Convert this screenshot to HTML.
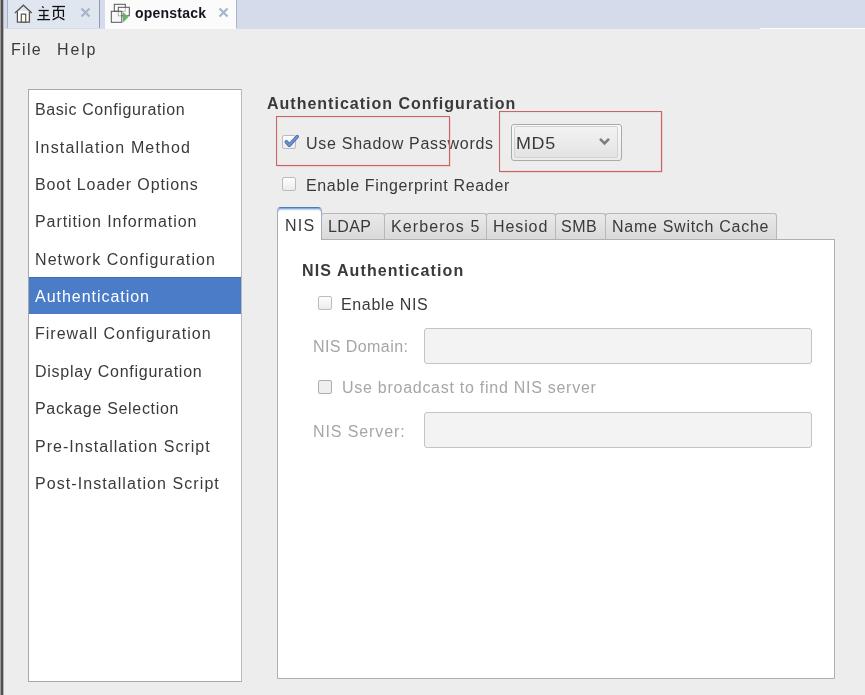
<!DOCTYPE html>
<html><head><meta charset="utf-8">
<style>
*{margin:0;padding:0;box-sizing:border-box}
html,body{width:865px;height:695px;overflow:hidden;background:#ededed}
body{position:relative;-webkit-font-smoothing:antialiased;font-family:"Liberation Sans",sans-serif;color:#3a3a3a}
.a{position:absolute}
.t{will-change:transform;position:absolute;white-space:pre;font-size:16px;line-height:16px;letter-spacing:0.7px;color:#3a3a3a}
.b{font-weight:bold;letter-spacing:1px}
.dis{color:#a6a6a6}
#tabbar{left:0;top:0;width:865px;height:29px;background:#d5dbeb}
#edge0{left:0;top:0;width:1px;height:695px;background:#9c9c9c}
#edge1{left:1px;top:0;width:2px;height:695px;background:#505050}
#edge2{left:3px;top:0;width:1px;height:695px;background:#b4b4b4}
#tab1{left:8px;top:0;width:91px;height:28px;background:#e0e6f0}
#tab1l{left:7px;top:0;width:1px;height:28px;background:#a6b2c8}
#tab1r{left:99px;top:0;width:1px;height:28px;background:#8c9ab8}
#tab2{left:105px;top:0;width:131px;height:29px;background:#fbfbfc}
#tab2r{left:236px;top:0;width:1px;height:28px;background:#a8b4cc}
.x{position:absolute;color:#a3b3cc;font-size:15px;font-weight:bold;line-height:15px}
#side{left:28px;top:89px;width:214px;height:593px;background:#fff;border:1px solid #a8a8a8;border-right-color:#b8b8b8}
.si{left:35px}
#sel{left:29px;top:277px;width:212px;height:37px;background:#4a7cc8;border-top:1px solid #3d6cb8}
.red{position:absolute;border:1.5px solid #c76565;box-shadow:0 0 1px .5px rgba(235,170,170,.35),inset 0 0 1px .5px rgba(235,170,170,.35)}
#nb{left:277px;top:239px;width:558px;height:440px;background:#fff;border:1px solid #b0b0b0}
.tab{position:absolute;top:213px;height:26px;background:linear-gradient(#e9e9e9,#d9d9d9);border:1px solid #b8b8b8;border-bottom:none;border-radius:3px 3px 0 0}
#atab{left:277px;top:207px;width:45px;height:33px;background:#fff;border:1px solid #a4acb8;border-top:1px solid #4d7bbd;border-bottom:none;border-radius:4px 4px 0 0;box-shadow:inset 0 1px 0 #86abdf,inset 0 2px 0 #c6dbf3,inset 0 3px 0 #eef5fc}
.entry{position:absolute;left:424px;width:388px;height:36px;background:#f3f3f3;border:1px solid #c4c4c4;border-radius:3px}
.cb{position:absolute;width:14px;height:14px;border:1px solid #bcbcbc;border-radius:2px;background:linear-gradient(#fdfdfd,#ececec)}
#combo{left:511px;top:124px;width:111px;height:37px;border:1px solid #a9a9a9;border-radius:3px;background:linear-gradient(#f9f9f9,#ececec)}#combo2{left:514px;top:126px;width:104px;height:32px;border:1px solid #d2d2d2;border-radius:2px;background:linear-gradient(#f3f3f3,#e3e3e3)}
</style></head><body>
<div id="tabbar" class="a"></div>
<div id="tab1l" class="a"></div>
<div id="tab1" class="a"></div>
<div id="tab1r" class="a"></div>
<div id="tab2" class="a"></div>
<div id="tab2r" class="a"></div>
<div class="a" style="left:760px;top:28px;width:105px;height:1px;background:#fbfbfd"></div>
<div class="a" style="left:237px;top:27px;width:523px;height:1px;background:#d9dcea"></div>
<!-- home icon -->
<svg class="a" style="left:14px;top:3.5px" width="20" height="20" viewBox="0 0 20 20">
<path d="M1 9 L9.4 1.2 L17.8 9" fill="none" stroke="#555" stroke-width="1.3" stroke-linejoin="miter"/>
<path d="M3.4 7.2 V18.2 H15.4 V7.2" fill="#fff" stroke="#555" stroke-width="1.3"/>
<path d="M7.3 18.2 V10.1 H11.7 V18.2 Z" fill="#fffce8" stroke="#555" stroke-width="1.2"/>
</svg>
<svg id="zh" class="a" style="left:0;top:0" width="70" height="24" viewBox="0 0 70 24" fill="none" stroke="#111" stroke-width="1.3">
<path d="M42.2 6.4 L43.6 7.8"/>
<path d="M38.6 10.5 H48.8"/>
<path d="M39 15.5 H48.4"/>
<path d="M37.3 19.6 H50"/>
<path d="M43.9 10.5 V19.6"/>
<path d="M52.3 6.5 H65"/>
<path d="M58.4 6.8 L57.4 10"/>
<path d="M53.7 17 V10.3 H63.4 V17"/>
<path d="M58.4 10.6 V16.8 L52.6 19.8"/>
<path d="M59.4 17.2 L64.4 19.8"/>
</svg>
<svg class="a" style="left:80px;top:6.5px" width="11" height="11" viewBox="0 0 11 11"><path d="M1.5 1.5 L9.5 9.5 M9.5 1.5 L1.5 9.5" stroke="#a6b6cc" stroke-width="2.3"/></svg>
<!-- openstack icon -->
<svg class="a" style="left:110px;top:3px" width="22" height="22" viewBox="0 0 22 22">
<rect x="4.3" y="1.3" width="11" height="7" fill="#fbfbfb" stroke="#555" stroke-width="1"/>
<rect x="8.3" y="4.3" width="11" height="8.5" fill="rgba(255,255,255,.6)" stroke="#555" stroke-width="1"/>
<rect x="1.3" y="8.3" width="10.5" height="11" fill="rgba(245,245,250,.6)" stroke="#555" stroke-width="1"/>
<path d="M13 9 L18.5 14 L13 19.5 Z" fill="#66b466"/>
</svg>
<div id="t2" class="t" style="left:134.60px;top:4.80px;font-size:14px;color:#151520;font-weight:bold;letter-spacing:0.22px">openstack</div>
<svg class="a" style="left:217.5px;top:6.5px" width="11" height="11" viewBox="0 0 11 11"><path d="M1.5 1.5 L9.5 9.5 M9.5 1.5 L1.5 9.5" stroke="#a6b6cc" stroke-width="2.3"/></svg>

<div id="edge0" class="a"></div><div id="edge1" class="a"></div><div id="edge2" class="a"></div>

<div id="t3" class="t" style="left:11.00px;top:41.80px;letter-spacing:1.30px">File</div>
<div id="t4" class="t" style="left:57.00px;top:41.80px;letter-spacing:1.87px">Help</div>

<div id="side" class="a"></div>
<div id="sel" class="a"></div>
<div id="t5" class="t si" style="top:102.30px;letter-spacing:0.60px">Basic Configuration</div>
<div id="t6" class="t si" style="top:140.04px;letter-spacing:1.15px">Installation Method</div>
<div id="t7" class="t si" style="top:177.18px;letter-spacing:0.89px">Boot Loader Options</div>
<div id="t8" class="t si" style="top:214.12px;letter-spacing:0.91px">Partition Information</div>
<div id="t9" class="t si" style="top:252.26px;letter-spacing:1.08px">Network Configuration</div>
<div id="t10" class="t si" style="top:289.20px;color:#fff;letter-spacing:0.97px">Authentication</div>
<div id="t11" class="t si" style="top:326.14px;letter-spacing:0.99px">Firewall Configuration</div>
<div id="t12" class="t si" style="top:364.28px;letter-spacing:0.73px">Display Configuration</div>
<div id="t13" class="t si" style="top:401.22px;letter-spacing:0.68px">Package Selection</div>
<div id="t14" class="t si" style="top:439.36px;letter-spacing:1.03px">Pre-Installation Script</div>
<div id="t15" class="t si" style="top:476.30px;letter-spacing:1.07px">Post-Installation Script</div>

<div id="t16" class="t b" style="left:266.50px;top:95.80px;letter-spacing:1.00px">Authentication Configuration</div>

<div class="cb" style="left:282px;top:135px"></div>
<svg class="a" style="left:282px;top:132px" width="18" height="18" viewBox="0 0 18 18">
<path d="M4.3 9.8 L7.3 13.2 L15.2 4.6" fill="none" stroke="#4a6cb0" stroke-width="3.6" stroke-linecap="round" stroke-linejoin="round"/><path d="M4.3 9.8 L7.3 13.2 L15.2 4.6" fill="none" stroke="#7094d2" stroke-width="1.8" stroke-linecap="round" stroke-linejoin="round"/>
</svg>
<div id="t17" class="t" style="left:306.40px;top:135.50px;letter-spacing:0.72px">Use Shadow Passwords</div>
<div class="red" style="left:275.5px;top:115.5px;width:174.5px;height:50.5px"></div>

<div id="combo" class="a"></div><div id="combo2" class="a"></div>
<div id="t18" class="t" style="left:516.00px;top:136.00px;letter-spacing:0.60px;transform:scaleX(1.12);transform-origin:0 0">MD5</div>
<svg class="a" style="left:598px;top:137px" width="13" height="9" viewBox="0 0 13 9">
<path d="M2 1.8 L6.5 6.3 L11 1.8" fill="none" stroke="#7c7c7c" stroke-width="2.6"/>
</svg>
<div class="red" style="left:499px;top:110.5px;width:162.5px;height:61px"></div>

<div class="cb" style="left:282px;top:177px"></div>
<div id="t19" class="t" style="left:306.20px;top:177.90px;letter-spacing:0.65px">Enable Fingerprint Reader</div>

<div id="nb" class="a"></div>
<div class="tab" style="left:321px;width:64px"></div>
<div class="tab" style="left:384px;width:103px"></div>
<div class="tab" style="left:486px;width:70px"></div>
<div class="tab" style="left:555px;width:51px"></div>
<div class="tab" style="left:605px;width:172px"></div>
<div id="atab" class="a"></div>
<div id="t25" class="t" style="left:285.00px;top:218.40px;letter-spacing:1.20px">NIS</div>
<div id="t26" class="t" style="left:328.00px;top:219.00px;letter-spacing:0.36px">LDAP</div>
<div id="t27" class="t" style="left:390.60px;top:219.20px;letter-spacing:1.12px">Kerberos 5</div>
<div id="t28" class="t" style="left:492.60px;top:219.20px;letter-spacing:0.90px">Hesiod</div>
<div id="t29" class="t" style="left:561.00px;top:219.20px;letter-spacing:0.50px">SMB</div>
<div id="t30" class="t" style="left:612.00px;top:219.20px;letter-spacing:0.72px">Name Switch Cache</div>

<div id="t31" class="t b" style="left:301.80px;top:262.70px;letter-spacing:1.10px">NIS Authentication</div>
<div class="cb" style="left:318px;top:296px"></div>
<div id="t32" class="t" style="left:341.00px;top:297.00px;letter-spacing:0.65px">Enable NIS</div>
<div id="t33" class="t dis" style="left:313.40px;top:338.90px;letter-spacing:0.42px">NIS Domain:</div>
<div class="entry" style="top:328px"></div>
<div class="cb" style="left:318px;top:380px;border-color:#aeaeae;background:#efefef"></div>
<div id="t34" class="t dis" style="left:341.60px;top:380.30px;letter-spacing:0.73px">Use broadcast to find NIS server</div>
<div id="t35" class="t dis" style="left:313.40px;top:423.90px;letter-spacing:0.90px">NIS Server:</div>
<div class="entry" style="top:412px"></div>
</body></html>
